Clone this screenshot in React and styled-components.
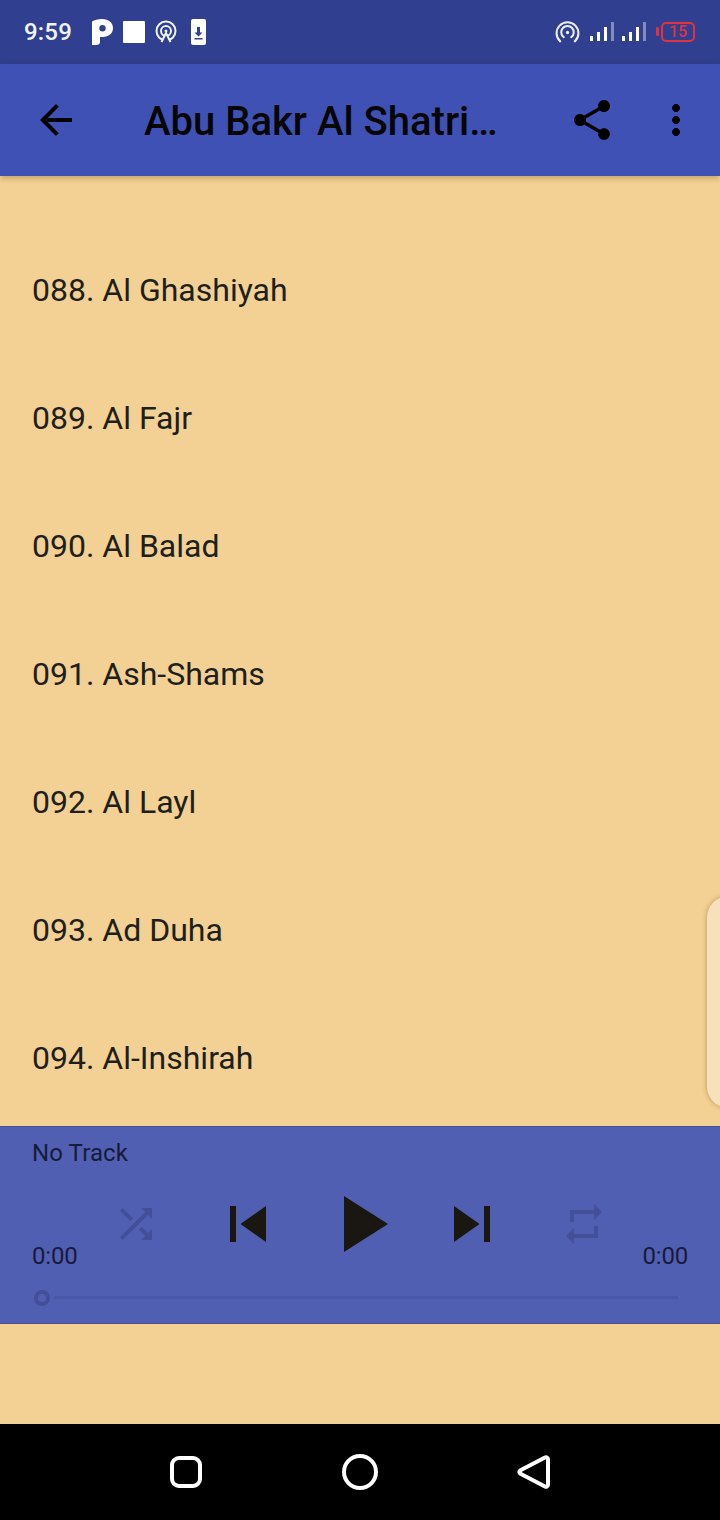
import React from 'react';
import styled, { createGlobalStyle } from 'styled-components';

const GlobalStyle = createGlobalStyle`
	html, body {
		margin: 0;
		padding: 0;
		background: #f3d093;
		font-family: "Roboto", "Liberation Sans", sans-serif;
	}
`;

const tracks = [
	'088. Al Ghashiyah',
	'089. Al Fajr',
	'090. Al Balad',
	'091. Ash-Shams',
	'092. Al Layl',
	'093. Ad Duha',
	'094. Al-Inshirah',
];

const Screen = styled.div`
	position: relative;
	display: flex;
	flex-direction: column;
	width: 720px;
	height: 1520px;
	overflow: hidden;
	background: #f3d093;
`;

const StatusBar = styled.div`
	display: flex;
	align-items: center;
	justify-content: space-between;
	flex-shrink: 0;
	height: 64px;
	padding: 0 25px 0 24px;
	background: #303f8f;
`;

const StatusGroup = styled.div`
	display: flex;
	align-items: center;
	gap: ${props => props.$gap}px;
`;

const Clock = styled.span`
	margin-right: 10px;
	color: #f1f3fa;
	font-size: 24px;
	font-weight: 500;
	line-height: 32px;
	letter-spacing: 0.2px;
`;

const Toolbar = styled.div`
	position: relative;
	z-index: 2;
	display: flex;
	align-items: center;
	flex-shrink: 0;
	height: 112px;
	padding-right: 2px;
	background: #3f51b5;
	box-shadow: 0 2px 6px rgba(60, 40, 0, 0.28);
`;

const ToolbarButton = styled.div`
	display: flex;
	align-items: center;
	justify-content: center;
	flex-shrink: 0;
	width: ${props => props.$width}px;
	height: 112px;
	color: #000;
`;

const Title = styled.div`
	flex: 1;
	padding: 4px 0 0 32px;
	color: #050505;
	font-size: 40px;
	font-weight: 500;
	line-height: 48px;
	white-space: nowrap;
`;

const TrackList = styled.div`
	flex: 1;
	min-height: 0;
	overflow: hidden;
	padding-top: 50px;
`;

const TrackRow = styled.div`
	display: flex;
	align-items: center;
	height: 128px;
	padding-left: 32px;
	color: #211f1c;
	font-size: 32px;
	line-height: 40px;
`;

const SideHandle = styled.div`
	position: absolute;
	top: 896px;
	right: -30px;
	width: 43px;
	height: 212px;
	border-radius: 24px;
	background: #f6e1bc;
	box-shadow: 0 0 5px rgba(110, 80, 20, 0.45);
`;

const Player = styled.div`
	display: flex;
	flex-direction: column;
	flex-shrink: 0;
	box-sizing: border-box;
	height: 198px;
	background: #515fb3;
	border-top: 1px solid #434f96;
	border-bottom: 1px solid #434f96;
`;

const TrackName = styled.div`
	height: 49px;
	padding: 12px 32px 0;
	box-sizing: border-box;
	color: #171a3a;
	font-size: 24px;
	line-height: 28px;
	letter-spacing: 0.1px;
`;

const ControlRow = styled.div`
	display: grid;
	grid-template-columns: 48px 560px 48px;
	height: 96px;
	padding: 0 32px;
`;

const Time = styled.span`
	align-self: end;
	margin-bottom: 2px;
	color: #171a3a;
	font-size: 24px;
	line-height: 28px;
	letter-spacing: -0.2px;
	white-space: nowrap;
	justify-self: ${props => (props.$right ? 'end' : 'start')};
`;

const Controls = styled.div`
	display: grid;
	grid-template-columns: repeat(5, 1fr);
	align-items: center;
	justify-items: center;
`;

const ControlIcon = styled.svg`
	display: block;
	width: ${props => props.$size}px;
	height: ${props => props.$size}px;
	fill: ${props => (props.$dim ? '#434f99' : '#1a1611')};
`;

const SeekRow = styled.div`
	display: flex;
	align-items: center;
	flex: 1;
	padding: 0 42px 0 34px;
`;

const SeekThumb = styled.div`
	flex-shrink: 0;
	box-sizing: border-box;
	width: 16px;
	height: 16px;
	margin-right: 4px;
	border: 4px solid #434f99;
	border-radius: 50%;
`;

const SeekTrack = styled.div`
	flex: 1;
	height: 3px;
	background: #4a57a8;
`;

const Spacer = styled.div`
	flex-shrink: 0;
	height: 100px;
`;

const NavBar = styled.div`
	display: grid;
	grid-template-columns: repeat(3, 174px);
	justify-content: center;
	align-items: center;
	justify-items: center;
	flex-shrink: 0;
	height: 96px;
	background: #000;
`;

const BatteryLabel = styled.span`
	position: absolute;
	inset: 0;
	display: flex;
	align-items: center;
	justify-content: center;
	padding-left: 5px;
	color: #df3341;
	font-size: 16px;
	font-weight: 500;
	line-height: 20px;
`;

const BatteryBox = styled.div`
	position: relative;
	width: 39px;
	height: 20px;
`;

const HotspotIcon = ({ size, opacity }) => (
	<svg width={size} height={size} viewBox="0 0 24 24" fill="none" stroke="#fff" strokeWidth="2" opacity={opacity}>
		<path d="M5 20.5A10.5 10.5 0 1 1 19 20.5" strokeLinecap="round" />
		<path d="M8.4 16.5A6 6 0 1 1 15.6 16.5" strokeLinecap="round" />
		<circle cx="12" cy="12" r="1.6" fill="#fff" stroke="none" />
	</svg>
);

const Cast = () => (
	<svg width="22" height="24" viewBox="0 0 22 24" fill="none" stroke="#f1f3fa" strokeWidth="2">
		<circle cx="11" cy="11" r="9.5" />
		<circle cx="11" cy="11" r="5" />
		<path d="M6.5 22 11 13l4.5 9" fill="#303f8f" />
		<circle cx="11" cy="11" r="1.5" fill="#f1f3fa" stroke="none" />
	</svg>
);

const Signal = () => (
	<svg width="24" height="20" viewBox="0 0 24 20" fill="#fff">
		<rect x="0" y="14" width="3" height="5" />
		<rect x="7" y="10" width="3" height="9" />
		<rect x="14" y="5" width="3" height="14" />
		<rect x="21" y="0" width="3" height="19" opacity="0.4" />
	</svg>
);

const Battery = () => (
	<BatteryBox>
		<svg width="39" height="20" viewBox="0 0 39 20" fill="none">
			<rect x="0" y="5" width="3" height="9" rx="1" fill="#df3341" />
			<rect x="6" y="1" width="32" height="18" rx="4" stroke="#df3341" strokeWidth="2" />
		</svg>
		<BatteryLabel>15</BatteryLabel>
	</BatteryBox>
);

const App = () => (
	<Screen>
		<GlobalStyle />
		<StatusBar>
			<StatusGroup $gap={10}>
				<Clock>9:59</Clock>
				<svg width="21" height="26" viewBox="0 0 21 26" fill="#fff">
					<path fillRule="evenodd" d="M0 2.500C2.500 1 6 0 10 0c6.500 0 11 3.600 11 9s-4.400 9-10 9H8v5c0 2-1.500 3-3.500 3H0zM10.500 6a3.200 3.200 0 1 0 0 6.400 3.200 3.200 0 0 0 0-6.400z" />
				</svg>
				<svg width="22" height="22" viewBox="0 0 22 22" fill="#fff">
					<rect width="22" height="22" rx="1" />
				</svg>
				<Cast />
				<svg width="23" height="26" viewBox="0 0 23 26" fill="#fff">
					<path fillRule="evenodd" d="M6 0h11a2 2 0 0 1 2 2v22a2 2 0 0 1-2 2H6a2 2 0 0 1-2-2V2a2 2 0 0 1 2-2zM10 8v5.500H7.500l4 4 4-4H13V8zM7.500 19v1.500h8V19z" />
				</svg>
			</StatusGroup>
			<StatusGroup $gap={10}>
				<HotspotIcon size={25} opacity={0.9} />
				<StatusGroup $gap={8}>
					<Signal />
					<Signal />
				</StatusGroup>
				<Battery />
			</StatusGroup>
		</StatusBar>
		<Toolbar>
			<ToolbarButton $width={112}>
				<svg width="48" height="48" viewBox="0 0 24 24" fill="currentColor">
					<path d="M20 11H7.830l5.590-5.590L12 4l-8 8 8 8 1.410-1.410L7.830 13H20v-2z" />
				</svg>
			</ToolbarButton>
			<Title>Abu Bakr Al Shatri…</Title>
			<ToolbarButton $width={84}>
				<svg width="48" height="48" viewBox="0 0 24 24" fill="currentColor">
					<path d="M18 16.080c-.76 0-1.440.3-1.960.77L8.910 12.700c.05-.23.09-.46.09-.7s-.04-.47-.09-.7l7.050-4.110c.54.5 1.250.81 2.040.81 1.660 0 3-1.340 3-3s-1.340-3-3-3-3 1.340-3 3c0 .24.04.47.09.7L8.040 9.810C7.500 9.310 6.790 9 6 9c-1.660 0-3 1.340-3 3s1.340 3 3 3c.79 0 1.500-.31 2.040-.81l7.120 4.160c-.05.21-.08.43-.08.65 0 1.610 1.310 2.920 2.920 2.920 1.610 0 2.920-1.310 2.920-2.920s-1.310-2.920-2.920-2.920z" />
				</svg>
			</ToolbarButton>
			<ToolbarButton $width={84}>
				<svg width="48" height="48" viewBox="0 0 24 24" fill="currentColor">
					<path d="M12 8c1.100 0 2-.9 2-2s-.9-2-2-2-2 .9-2 2 .9 2 2 2zm0 2c-1.100 0-2 .9-2 2s.9 2 2 2 2-.9 2-2-.9-2-2-2zm0 6c-1.100 0-2 .9-2 2s.9 2 2 2 2-.9 2-2-.9-2-2-2z" />
				</svg>
			</ToolbarButton>
		</Toolbar>
		<TrackList>
			{tracks.map(track => <TrackRow key={track}>{track}</TrackRow>)}
		</TrackList>
		<SideHandle />
		<Player>
			<TrackName>No Track</TrackName>
			<ControlRow>
				<Time>0:00</Time>
				<Controls>
					<ControlIcon $size={48} $dim viewBox="0 0 24 24">
						<path d="M10.590 9.170L5.410 4 4 5.410l5.170 5.170 1.420-1.410zM14.500 4l2.040 2.040L4 18.590 5.410 20 17.960 7.460 20 9.500V4h-5.500zm.33 9.410l-1.410 1.410 3.130 3.130L14.500 20H20v-5.500l-2.040 2.040-3.130-3.130z" />
					</ControlIcon>
					<ControlIcon $size={72} viewBox="0 0 24 24">
						<path d="M6 6h2v12H6zm3.500 6l8.500 6V6z" />
					</ControlIcon>
					<ControlIcon $size={96} viewBox="0 0 24 24">
						<path d="M8 5v14l11-7z" />
					</ControlIcon>
					<ControlIcon $size={72} viewBox="0 0 24 24">
						<path d="M6 18l8.500-6L6 6v12zM16 6v12h2V6h-2z" />
					</ControlIcon>
					<ControlIcon $size={48} $dim viewBox="0 0 24 24">
						<path d="M7 7h10v3l4-4-4-4v3H5v6h2V7zm10 10H7v-3l-4 4 4 4v-3h12v-6h-2v4z" />
					</ControlIcon>
				</Controls>
				<Time $right>0:00</Time>
			</ControlRow>
			<SeekRow>
				<SeekThumb />
				<SeekTrack />
			</SeekRow>
		</Player>
		<Spacer />
		<NavBar>
			<svg width="36" height="36" viewBox="0 0 36 36" fill="none" stroke="#fff" strokeWidth="4">
				<rect x="4" y="4" width="28" height="28" rx="7" />
			</svg>
			<svg width="36" height="36" viewBox="0 0 36 36" fill="none" stroke="#fff" strokeWidth="4">
				<circle cx="18" cy="18" r="16" />
			</svg>
			<svg width="36" height="36" viewBox="0 0 36 36" fill="none" stroke="#fff" strokeWidth="4" strokeLinejoin="round">
				<path d="M29 3.500 4.500 16.200a2 2 0 0 0 0 3.600L29 32.500a2 2 0 0 0 3-1.700V5.200a2 2 0 0 0-3-1.700z" />
			</svg>
		</NavBar>
	</Screen>
);

export default App;
